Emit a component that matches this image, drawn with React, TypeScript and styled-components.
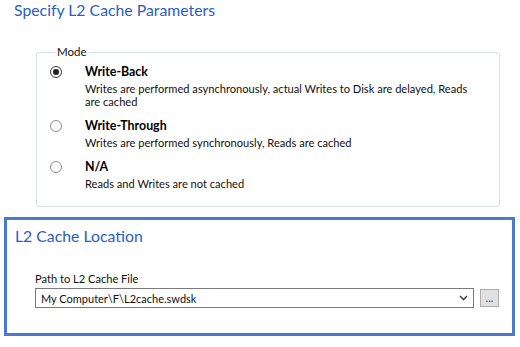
import React from "react";
import styled, { createGlobalStyle } from "styled-components";

const GlobalStyle = createGlobalStyle`
  html, body { margin: 0; padding: 0; background: #ffffff; }
  body { font-family: Lato, "Open Sans", sans-serif; color: #111111; }
  * { box-sizing: border-box; }
`;

const Page = styled.div`
  width: 520px;
  height: 347px;
  padding: 0 5px 0 4px;
  display: flex;
  flex-direction: column;
  align-items: flex-start;
`;

const Heading = styled.div<{ $indent: number }>`
  margin-left: ${(p) => p.$indent}px;
  font-size: 15.8px;
  line-height: 20px;
  height: 20px;
  color: #2a5ebf;
  white-space: nowrap;
`;

const Group = styled.fieldset`
  margin: 25px 0 0 32px;
  width: 464px;
  height: 162px;
  border: 1px solid #d6dde3;
  border-radius: 3px;
  padding: 4px 12px 0 13px;
  display: flex;
  flex-direction: column;
  gap: 9px;
`;

const Legend = styled.legend`
  margin-left: 5px;
  padding: 0 2px;
  font-size: 11.5px;
  line-height: 14px;
  color: #111;
`;

const Option = styled.div`
  display: grid;
  grid-template-columns: 35px 1fr;
  align-items: start;
`;

const Radio = styled.span<{ $checked?: boolean }>`
  margin-top: 3px;
  width: 12px;
  height: 12px;
  border-radius: 50%;
  border: 1px solid ${(p) => (p.$checked ? "#3a3a3a" : "#8d8d8d")};
  background: #ffffff;
  display: flex;
  align-items: center;
  justify-content: center;
  &::after {
    content: "";
    display: ${(p) => (p.$checked ? "block" : "none")};
    width: 6px;
    height: 6px;
    border-radius: 50%;
    background: #1f1f1f;
  }
`;

const OptionText = styled.div`
  display: flex;
  flex-direction: column;
  gap: 2px;
`;

const OptionTitle = styled.div`
  font-size: 12.4px;
  font-weight: 700;
  line-height: 17px;
  color: #000;
`;

const OptionDesc = styled.div`
  font-size: 11.1px;
  line-height: 13px;
  color: #111;
  white-space: nowrap;
`;

const LocationBox = styled.section`
  margin-top: 10px;
  width: 511px;
  height: 119px;
  border: 3px solid #4a7acb;
  padding: 6px 0 0 8px;
  display: flex;
  flex-direction: column;
`;

const FieldLabel = styled.div`
  margin: 26px 0 0 20px;
  font-size: 11.1px;
  line-height: 14px;
  color: #111;
`;

const FieldRow = styled.div`
  margin: 2px 0 0 20px;
  display: flex;
  align-items: center;
  gap: 6px;
`;

const Combo = styled.div`
  width: 439px;
  height: 20px;
  border: 1px solid #7a7a7a;
  background: #fff;
  display: flex;
  align-items: center;
  justify-content: space-between;
  padding: 0 5px 0 5px;
  font-size: 11px;
  color: #111;
`;

const BrowseButton = styled.button`
  width: 19px;
  height: 18px;
  padding: 0 0 3px;
  border: 1px solid #adadad;
  background: #e1e1e1;
  font-family: inherit;
  font-size: 11px;
  line-height: 1;
  color: #3b3b8a;
  display: flex;
  align-items: flex-end;
  justify-content: center;
`;

const options = [
  {
    title: "Write-Back",
    lines: [
      "Writes are performed asynchronously, actual Writes to Disk are delayed, Reads",
      "are cached",
    ],
    checked: true,
  },
  {
    title: "Write-Through",
    lines: ["Writes are performed synchronously, Reads are cached"],
  },
  { title: "N/A", lines: ["Reads and Writes are not cached"] },
];

export default function App() {
  return (
    <>
      <GlobalStyle />
      <Page>
        <Heading $indent={10}>Specify L2 Cache Parameters</Heading>
        <Group>
          <Legend>Mode</Legend>
          {options.map((o) => (
            <Option key={o.title}>
              <Radio $checked={o.checked} />
              <OptionText>
                <OptionTitle>{o.title}</OptionTitle>
                <OptionDesc>
                  {o.lines.map((l, i) => (
                    <div key={i}>{l}</div>
                  ))}
                </OptionDesc>
              </OptionText>
            </Option>
          ))}
        </Group>
        <LocationBox>
          <Heading $indent={0}>L2 Cache Location</Heading>
          <FieldLabel>Path to L2 Cache File</FieldLabel>
          <FieldRow>
            <Combo>
              <span>My Computer\F\L2cache.swdsk</span>
              <svg width="9" height="6" viewBox="0 0 9 6">
                <path d="M1 1 L4.5 4.5 L8 1" fill="none" stroke="#4a4a4a" strokeWidth="1.6" />
              </svg>
            </Combo>
            <BrowseButton>...</BrowseButton>
          </FieldRow>
        </LocationBox>
      </Page>
    </>
  );
}
